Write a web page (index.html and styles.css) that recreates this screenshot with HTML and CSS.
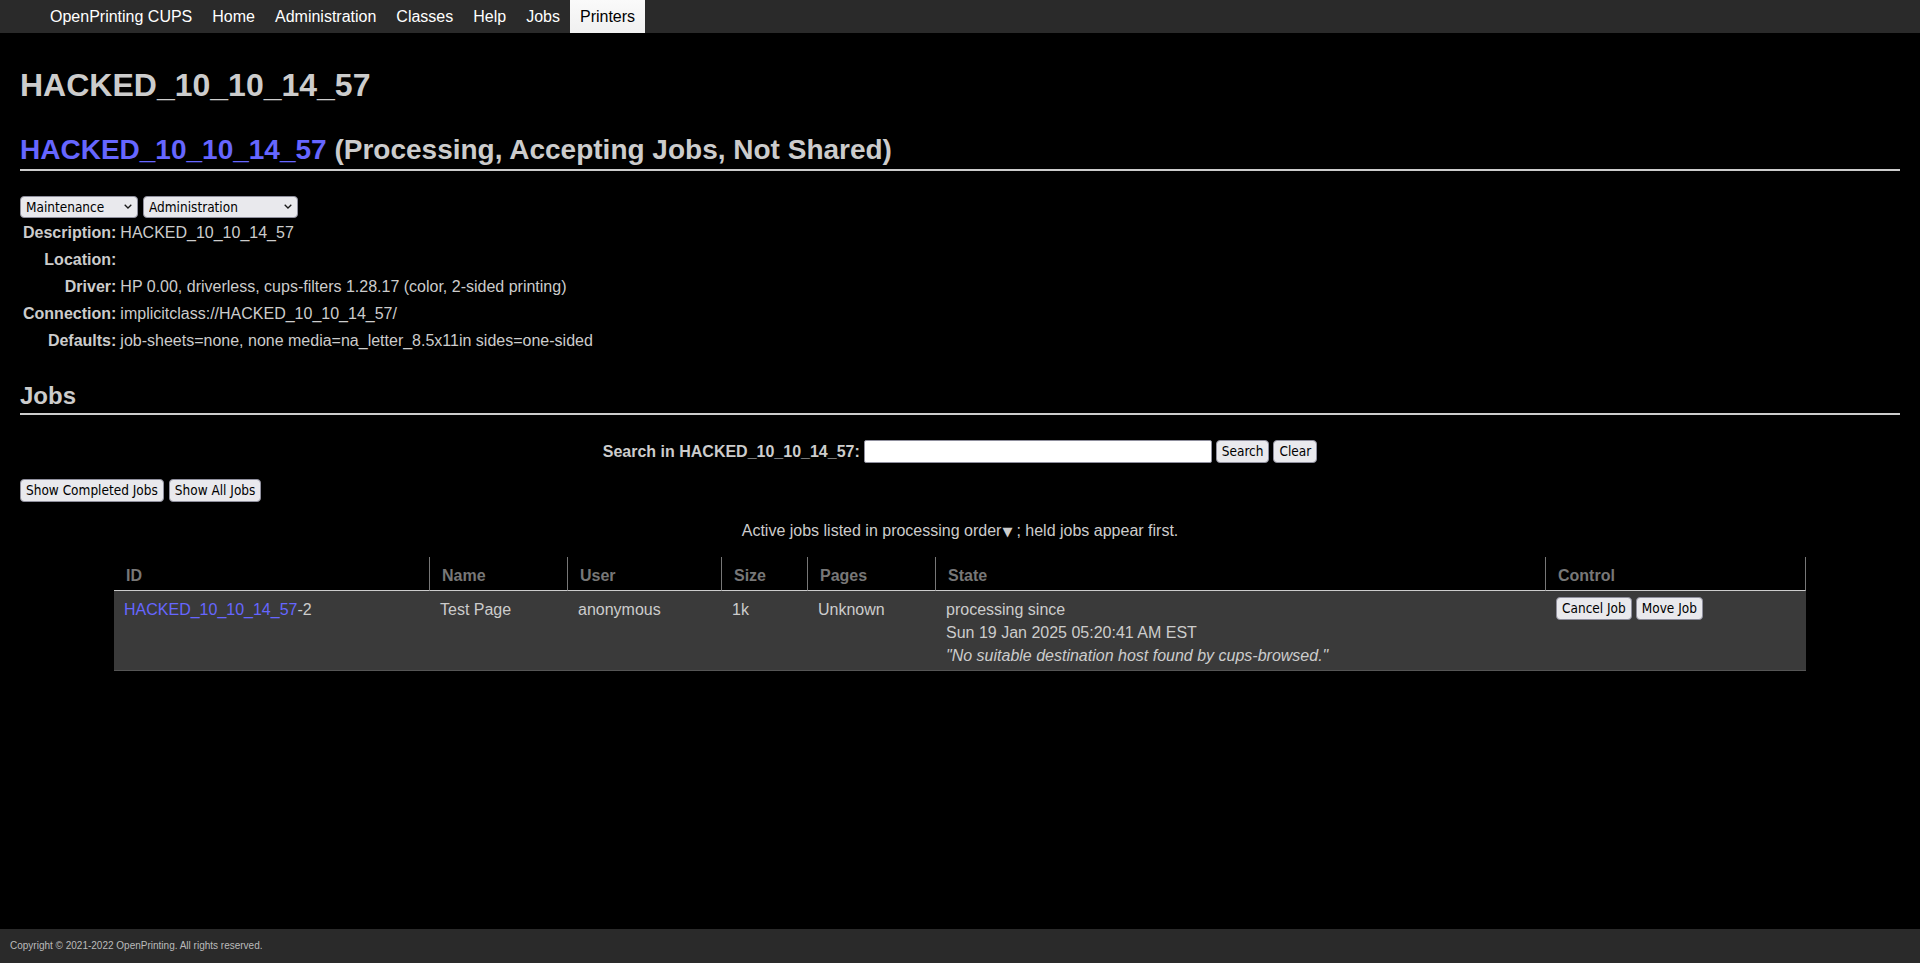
FILE: index.html
```html
<!DOCTYPE html>
<html lang="en">
<head>
<meta charset="utf-8">
<title>HACKED_10_10_14_57 - CUPS 2.4.2</title>
<link rel="stylesheet" href="styles.css">
</head>
<body>
<div class="header">
  <ul class="nav">
    <li><a href="#">OpenPrinting CUPS</a></li>
    <li><a href="#">Home</a></li>
    <li><a href="#">Administration</a></li>
    <li><a href="#">Classes</a></li>
    <li><a href="#">Help</a></li>
    <li><a href="#">Jobs</a></li>
    <li><a class="active" href="#">Printers</a></li>
  </ul>
</div>
<div class="content">
  <h1 class="title">HACKED_10_10_14_57</h1>
  <h2 class="title big"><a href="#">HACKED_10_10_14_57</a> (Processing, Accepting Jobs, Not Shared)</h2>
  <form class="actions">
    <span class="selwrap">
      <select class="ctl-sel sel-maint">
        <option>Maintenance</option>
        <option>Print Test Page</option>
        <option>Clean Print Heads</option>
        <option>Print Self-Test Page</option>
        <option>Pause Printer</option>
        <option>Reject Jobs</option>
        <option>Move All Jobs</option>
        <option>Cancel All Jobs</option>
      </select>
      <svg class="chev" viewBox="0 0 8 5" width="8" height="5"><path d="M0.7 0.7 L4 4 L7.3 0.7" fill="none" stroke="#1b1b1b" stroke-width="1.3"/></svg>
    </span>
    <span class="selwrap">
      <select class="ctl-sel sel-admin">
        <option>Administration</option>
        <option>Modify Printer</option>
        <option>Delete Printer</option>
        <option>Set Default Options</option>
        <option>Set As Server Default</option>
        <option>Set Allowed Users</option>
      </select>
      <svg class="chev" viewBox="0 0 8 5" width="8" height="5"><path d="M0.7 0.7 L4 4 L7.3 0.7" fill="none" stroke="#1b1b1b" stroke-width="1.3"/></svg>
    </span>
  </form>
  <table class="info">
    <tr><th>Description:</th><td>HACKED_10_10_14_57</td></tr>
    <tr><th>Location:</th><td></td></tr>
    <tr><th>Driver:</th><td>HP 0.00, driverless, cups-filters 1.28.17 (color, 2-sided printing)</td></tr>
    <tr><th>Connection:</th><td>implicitclass://HACKED_10_10_14_57/</td></tr>
    <tr><th>Defaults:</th><td>job-sheets=none, none media=na_letter_8.5x11in sides=one-sided</td></tr>
  </table>

  <h2 class="title">Jobs</h2>

  <form class="search">
    <b>Search in HACKED_10_10_14_57:</b>
    <input type="search" class="query">
    <input type="submit" class="btn" value="Search">
    <input type="submit" class="btn" value="Clear">
  </form>

  <form class="show">
    <input type="submit" class="btn" value="Show Completed Jobs">
    <input type="submit" class="btn" value="Show All Jobs">
  </form>

  <p class="order">Active jobs listed in processing order<span class="tri">▼</span>; held jobs appear first.</p>

  <table class="list">
    <colgroup>
      <col class="c-id"><col class="c-name"><col class="c-user"><col class="c-size"><col class="c-pages"><col class="c-state"><col class="c-control">
    </colgroup>
    <thead>
      <tr><th>ID</th><th>Name</th><th>User</th><th>Size</th><th>Pages</th><th>State</th><th>Control</th></tr>
    </thead>
    <tbody>
      <tr>
        <td><a href="#">HACKED_10_10_14_57</a>-2</td>
        <td>Test Page</td>
        <td>anonymous</td>
        <td>1k</td>
        <td>Unknown</td>
        <td>processing since<br>Sun 19 Jan 2025 05:20:41 AM EST<br><em>"No suitable destination host found by cups-browsed."</em></td>
        <td><form class="ctl"><input type="submit" class="btn" value="Cancel Job"><input type="submit" class="btn" value="Move Job"></form></td>
      </tr>
    </tbody>
  </table>
</div>
<div class="footer">Copyright © 2021-2022 OpenPrinting. All rights reserved.</div>
</body>
</html>
```

FILE: styles.css
```css
html, body {
  margin: 0;
  padding: 0;
}
body {
  background: #000;
  color: #ccc;
  font-family: "Liberation Sans", Arial, Helvetica, sans-serif;
  font-size: 16px;
  min-height: 100vh;
  display: flex;
  flex-direction: column;
}
a {
  color: #66f;
  text-decoration: none;
}

.header {
  background: #2a2a2a;
  height: 33px;
}
.nav {
  list-style: none;
  margin: 0 0 0 40px;
  padding: 0;
  display: flex;
}
.nav a {
  display: block;
  color: #fff;
  padding: 7px 10px;
  line-height: 19px;
}
.nav a.active {
  background: linear-gradient(#fafafa, #f0f0f0);
  color: #000;
}

.content {
  padding: 0 20px;
  flex: 1;
}
h1.title {
  font-size: 32px;
  line-height: 37px;
  margin: 34px 0 0;
}
h2.title {
  font-size: 24px;
  line-height: 28px;
  margin: 27px 0 0;
  padding-bottom: 3px;
  border-bottom: 2px solid #ccc;
}
h2.title.big {
  font-size: 28px;
  line-height: 32px;
  margin-top: 30px;
}

/* form controls */
.ctl-sel,
.btn {
  font-family: "DejaVu Sans Condensed", "DejaVu Sans", sans-serif;
  font-stretch: condensed;
  font-size: 13.5px;
  color: #000;
  background-color: #e9e9ed;
  border: 1px solid #8f8f9d;
  border-radius: 4px;
  box-sizing: border-box;
  margin: 0;
}
.btn {
  height: 23px;
  padding: 0 5px;
  line-height: 21px;
}
.ctl-sel {
  -webkit-appearance: none;
  appearance: none;
  height: 22px;
  padding: 0 16px 0 5px;
  display: block;
}
.selwrap {
  position: relative;
  display: block;
}
.chev {
  position: absolute;
  right: 6px;
  top: 8px;
  pointer-events: none;
}

.actions {
  margin: 25px 0 0;
  display: flex;
  gap: 5px;
}
.sel-maint { width: 118px; }
.sel-admin { width: 155px; }

.info {
  border-spacing: 2px;
  margin-top: 0;
}
.info th {
  text-align: right;
  padding: 3px 1px;
  line-height: 19px;
}
.info td {
  padding: 3px 1px;
  line-height: 19px;
}

.search {
  margin: 25px 0 0;
  display: flex;
  justify-content: center;
  align-items: center;
  gap: 4px;
  height: 23px;
}
.query {
  width: 348px;
  height: 23px;
  box-sizing: border-box;
  margin: 0;
  background: #fff;
  border: 1px solid #8f8f9d;
  border-radius: 2px;
}

.show {
  margin: 16px 0 0;
  display: flex;
  gap: 5px;
}
.order {
  margin: 20px 0 0;
  text-align: center;
  line-height: 18px;
}
.tri {
  font-family: "DejaVu Sans", sans-serif;
  font-size: 13px;
  margin: 0 4px 0 1px;
}

.list {
  width: 90%;
  margin: 16px auto 0;
  border-collapse: separate;
  border-spacing: 0;
  table-layout: fixed;
}
.c-id { width: 316px; }
.c-name { width: 138px; }
.c-user { width: 154px; }
.c-size { width: 86px; }
.c-pages { width: 128px; }
.c-state { width: 610px; }
.c-control { width: 260px; }
.list th {
  text-align: left;
  color: #777;
  padding: 10px 10px 6px 12px;
  line-height: 17px;
  border-right: 1px solid #777;
  border-bottom: 1px solid #ccc;
}
.list td {
  background: #3a3a3a;
  padding: 7px 10px 3px;
  line-height: 23px;
  vertical-align: top;
  border-bottom: 1px solid #555;
}
.ctl {
  margin: -1px 0 0;
  display: flex;
  gap: 4px;
}

.footer {
  background: #2a2a2a;
  color: #bbb;
  font-size: 10px;
  height: 34px;
  line-height: 34px;
  padding-left: 10px;
}
```
